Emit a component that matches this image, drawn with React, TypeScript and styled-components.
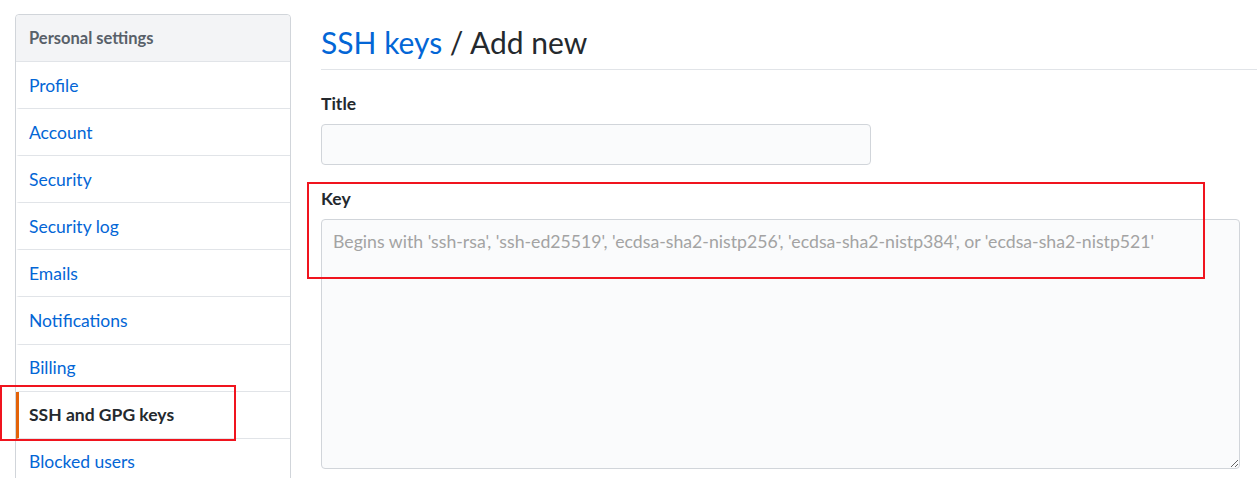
import React from "react";
import styled, { createGlobalStyle } from "styled-components";

const GlobalStyle = createGlobalStyle`
  body {
    margin: 0;
    background: #fff;
    font-family: Lato, "Noto Sans", "Liberation Sans", sans-serif;
    color: #24292e;
  }
`;

const menuItems = [
  "Profile",
  "Account",
  "Security",
  "Security log",
  "Emails",
  "Notifications",
  "Billing",
  "SSH and GPG keys",
  "Blocked users",
];

const selected = "SSH and GPG keys";

const App = () => {
  return (
    <>
      <GlobalStyle />
      <SPage>
        <SSidebar>
          <div className="menu-heading">Personal settings</div>
          {menuItems.map(item => (
            <SMenuItem key={item} selected={item === selected}>
              {item}
            </SMenuItem>
          ))}
        </SSidebar>
        <SMain>
          <div className="subhead">
            <h2 className="heading">
              <a className="crumb">SSH keys</a> / Add new
            </h2>
          </div>
          <form className="form">
            <div className="group">
              <label className="label">Title</label>
              <input className="title-input" type="text" />
            </div>
            <div className="group">
              <label className="label">Key</label>
              <textarea
                className="key-input"
                placeholder="Begins with 'ssh-rsa', 'ssh-ed25519', 'ecdsa-sha2-nistp256', 'ecdsa-sha2-nistp384', or 'ecdsa-sha2-nistp521'"
              />
            </div>
          </form>
        </SMain>
        <SMark top={385} left={0} width={236} height={56} />
        <SMark top={182} left={307} width={898} height={97} />
      </SPage>
    </>
  );
};

const SPage = styled.div`
  position: relative;
  display: flex;
  align-items: flex-start;
  padding: 14px 0 0 15px;
  height: 478px;
  box-sizing: border-box;
  overflow: hidden;
`;

const SSidebar = styled.nav`
  width: 276px;
  flex-shrink: 0;
  border: 1px solid #d1d5da;
  border-radius: 4px;
  box-sizing: border-box;
  .menu-heading {
    height: 47px;
    box-sizing: border-box;
    display: flex;
    align-items: center;
    padding-left: 13px;
    font-size: 16.5px;
    font-weight: 700;
    color: #586069;
    background: #f3f4f6;
    border-bottom: 1px solid #e1e4e8;
    border-radius: 4px 4px 0 0;
  }
`;

const SMenuItem = styled.a<{ selected?: boolean }>`
  display: flex;
  align-items: center;
  height: 47.1px;
  box-sizing: border-box;
  padding-left: 10px;
  font-size: 17.5px;
  color: ${p => (p.selected ? "#24292e" : "#0366d6")};
  font-weight: ${p => (p.selected ? 700 : 400)};
  border-bottom: 1px solid #e1e4e8;
  border-left: 3px solid ${p => (p.selected ? "#e36209" : "transparent")};
  cursor: pointer;
`;

const SMain = styled.main`
  flex: 1;
  margin-left: 30px;
  .subhead {
    height: 55px;
    border-bottom: 1px solid #e1e4e8;
    display: flex;
    align-items: center;
  }
  .heading {
    margin: 0;
    font-size: 30px;
    font-weight: 400;
    color: #24292e;
  }
  .crumb {
    color: #0366d6;
    cursor: pointer;
  }
  .form {
    padding-top: 23px;
  }
  .group {
    display: flex;
    flex-direction: column;
    align-items: flex-start;
    margin-bottom: 23px;
  }
  .label {
    font-size: 17.5px;
    font-weight: 700;
    line-height: 22px;
    margin-bottom: 9px;
  }
  .title-input {
    width: 550px;
    height: 41px;
    box-sizing: border-box;
    background: #fafbfc;
    border: 1px solid #d1d5da;
    border-radius: 4px;
    font-size: 17.5px;
  }
  .key-input {
    width: 919px;
    height: 250px;
    box-sizing: border-box;
    padding: 11px 11px;
    background: #fafbfc;
    border: 1px solid #d1d5da;
    border-radius: 4px;
    font-family: Lato, "Noto Sans", "Liberation Sans", sans-serif;
    font-size: 17.7px;
    line-height: 22px;
    resize: vertical;
  }
  .key-input::placeholder {
    color: #a3a3a3;
  }
`;

const SMark = styled.div<{ top: number; left: number; width: number; height: number }>`
  position: absolute;
  top: ${p => p.top}px;
  left: ${p => p.left}px;
  width: ${p => p.width}px;
  height: ${p => p.height}px;
  border: 2px solid #f0141e;
  box-sizing: border-box;
  pointer-events: none;
`;

export default App;
